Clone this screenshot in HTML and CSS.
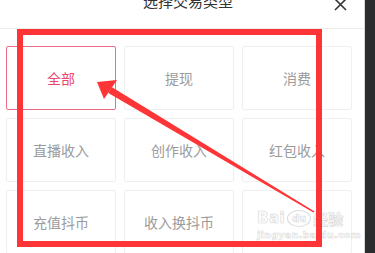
FILE: index.html
```html
<!DOCTYPE html>
<html lang="zh">
<head>
<meta charset="utf-8">
<link rel="stylesheet" href="styles.css">
</head>
<body>
<div class="screen">
  <div class="panel">
    <div class="header">
      <div class="title">选择交易类型</div>
      <svg class="close" width="13" height="13" viewBox="0 0 13 13"><path d="M1 1L12 12M12 1L1 12" stroke="#333" stroke-width="1.6" fill="none"/></svg>
    </div>
    <div class="grid">
      <div class="card active">全部</div>
      <div class="card">提现</div>
      <div class="card">消费</div>
      <div class="card">直播收入</div>
      <div class="card">创作收入</div>
      <div class="card">红包收入</div>
      <div class="card">充值抖币</div>
      <div class="card">收入换抖币</div>
      <div class="card"></div>
    </div>
  </div>
  <div class="edge"></div>
</div>
<div class="watermark">
  <div class="wm-top"><span class="wm-bai">Bai</span><span class="wm-paw">du</span><span class="wm-jy">经验</span></div>
  <div class="wm-url">jingyan.baidu.com</div>
</div>
<svg class="annot" width="375" height="253" viewBox="0 0 375 253">
  <rect x="20" y="32" width="299" height="212" fill="none" stroke="#fe3537" stroke-width="6"/>
  <polygon points="108.3,93 111.7,87 314.6,211.4 313.4,212.6" fill="#fe3537"/>
  <polygon points="97,82 117,80 104,99" fill="#fe3537"/>
</svg>
</body>
</html>
```
FILE: styles.css
```css
html, body {
  margin: 0;
  padding: 0;
  background: #fff;
  font-family: "Noto Sans CJK SC", "Noto Sans", sans-serif;
}
body {
  width: 375px;
  height: 253px;
  overflow: hidden;
  position: relative;
}
.screen {
  display: flex;
  width: 375px;
  height: 253px;
}
.panel {
  width: 365px;
  background: #fff;
  display: flex;
  flex-direction: column;
}
.edge {
  width: 10px;
  background: #2b2c2e;
  border-left: 1px solid #d8d8d8;
}
.header {
  height: 28px;
  flex: none;
  border-bottom: 1px solid #ececec;
  display: flex;
  justify-content: center;
  position: relative;
}
.title {
  font-size: 15px;
  line-height: 20px;
  margin-top: -9px;
  color: #333;
  margin-left: 12px;
}
.close {
  position: absolute;
  left: 334px;
  top: -2px;
}
.grid {
  display: grid;
  grid-template-columns: repeat(3, 110px);
  grid-auto-rows: 64px;
  column-gap: 8px;
  row-gap: 8px;
  padding: 17px 0 0 6px;
}
.card {
  border: 1px solid #efefef;
  border-radius: 2px;
  display: flex;
  align-items: center;
  justify-content: center;
  font-size: 14px;
  color: #9b9b9b;
  box-sizing: border-box;
}
.card.active {
  border-color: #ec6d86;
  color: #e9486b;
}
.annot {
  position: absolute;
  left: 0;
  top: 0;
}
.watermark {
  position: absolute;
  left: 257px;
  top: 209px;
  width: 92px;
  color: #fff;
  -webkit-text-stroke: 0.6px #d6d6d6;
  font-family: "DejaVu Sans", sans-serif;
}
.wm-top {
  display: flex;
  align-items: center;
  height: 18px;
}
.wm-bai {
  font-size: 15px;
  font-weight: bold;
  letter-spacing: 0.5px;
}
.wm-paw {
  font-size: 10px;
  font-weight: bold;
  border: 1px solid #dcdcdc;
  border-radius: 50%;
  width: 22px;
  height: 15px;
  display: flex;
  align-items: center;
  justify-content: center;
  margin: 0 2px;
}
.wm-jy {
  font-family: "Noto Sans CJK SC", sans-serif;
  font-size: 15px;
  font-weight: bold;
}
.wm-url {
  font-size: 9.5px;
  font-weight: bold;
  letter-spacing: 0.3px;
  margin-top: 2px;
  -webkit-text-stroke: 0.5px #d6d6d6;
}
```
